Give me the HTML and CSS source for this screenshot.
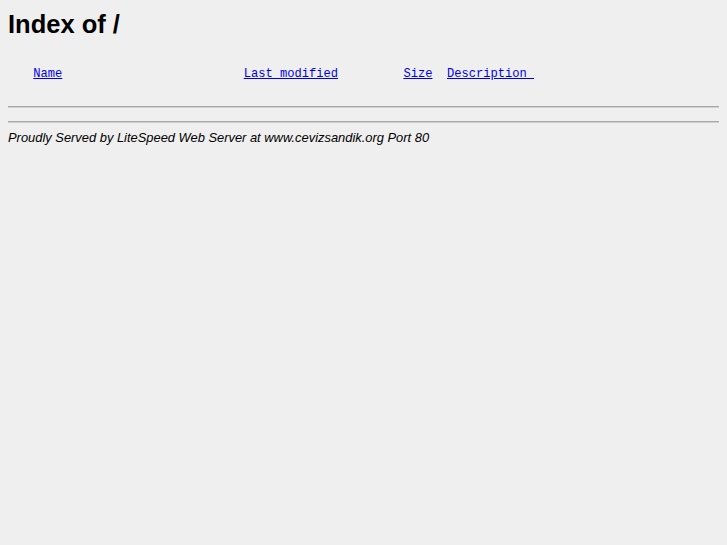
FILE: index.html
```html
<!DOCTYPE html>
<html>
<head>
  <meta charset="UTF-8">
  <title>Index of /</title>
  <link rel="stylesheet" href="styles.css">
</head>
<body>
  <h1 class="title">Index of /</h1>
  <pre class="listing"><span class="blank"></span> <a href="?N=D">Name</a>                         <a href="?M=A">Last modified</a>         <a href="?S=A">Size</a>  <a href="?D=A">Description </a>
<hr class="rule rule-inner"></pre>
  <hr class="rule rule-outer">
  <address class="footer">Proudly Served by LiteSpeed Web Server at www.cevizsandik.org Port 80</address>
</body>
</html>
```

FILE: styles.css
```css
body {
  margin: 8px;
  background: #efefef;
  color: #000;
  font-family: 'Liberation Sans', Arial, sans-serif;
}

.title {
  font-size: 25.5px;
  font-weight: bold;
  margin: 2px 0 0;
}

.listing {
  font-family: 'Liberation Mono', 'Courier New', monospace;
  font-size: 12.1px;
  margin: 28px 0 0;
}

.listing a {
  color: #0000ee;
}

.blank {
  display: inline-block;
  width: 18px;
  height: 1px;
}

.rule {
  border: 0;
  border-top: 1px solid #a8a8a8;
  border-bottom: 1px solid #d0d0d0;
}

.rule-inner {
  margin: 25px -1px 13px;
}

.rule-outer {
  margin: 0 -1px 7px;
}

.footer {
  font-size: 12.9px;
  margin: 0;
}
```
